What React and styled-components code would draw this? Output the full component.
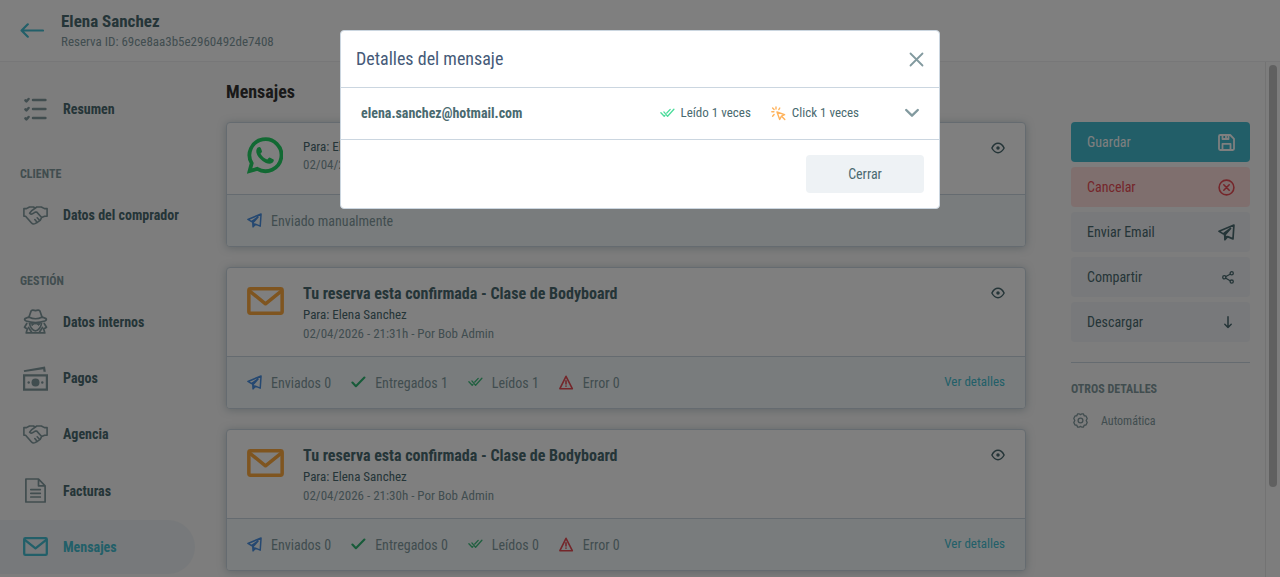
import React from 'react'
import styled, { createGlobalStyle } from 'styled-components';

const GlobalStyle = createGlobalStyle`
  * {
    box-sizing: border-box;
  }
  html, body {
    margin: 0;
    height: 100%;
    overflow: hidden;
  }
  body {
    font-family: 'Roboto Condensed', Roboto, sans-serif;
    font-stretch: 75%;
    color: #4a6a70;
    background: #fafafa;
  }
  svg {
    display: block;
    flex-shrink: 0;
  }
  button {
    font: inherit;
    border: 0;
    padding: 0;
    background: none;
  }
`;

// ---- icons ----

function Line({ w, h, box, stroke = 2, children }) {
  return (
    <svg
      width={w}
      height={h}
      viewBox={box || `0 0 ${w} ${h}`}
      fill="none"
      stroke="currentColor"
      strokeWidth={stroke}
      strokeLinecap="round"
      strokeLinejoin="round"
    >
      {children}
    </svg>
  )
}

const BackIcon = () => (
  <Line w={24} h={16} stroke={2.2}>
    <path d="M23 7.5H1.8M7.8 1.300L1.6 7.500L7.8 13.700" />
  </Line>
);

const ListIcon = () => (
  <Line w={25} h={25} stroke={2.5}>
    <path d="M10 3H22.400M10 12H22.400M10 21H22.400" />
    <path d="M2.400 3.400L3.400 4.400L5.600 2M2.400 12.400L3.400 13.400L5.600 11M2.400 21.400L3.400 22.400L5.600 20" />
  </Line>
);

const HandshakeIcon = () => (
  <Line w={25} h={19} stroke={1.6}>
    <path d="M12.3 2.2L10.5 1H6.5L3.5 2.6H0.9V10.2H2.6L8.3 16.7Q10 18.6 12 17.6L14.6 16.2L17.2 14.4L18.6 11.6L21.6 10.3H24.1V2.6H21.5L18.3 1H13.8L8.8 4.6L6.6 7.2Q8.4 9 10.6 7.2L12.2 6.1H13.8L18.4 11.2" />
    <path d="M11.8 13.6L13.7 15.8M14.2 11.8L16.3 14" />
  </Line>
);

const SpyIcon = () => (
  <Line w={25} h={25} stroke={1.7}>
    <path d="M5.8 8.5L8 2.200Q8.500 1 10 1.200L12.500 1.600L15 1.200Q16.500 1 17 2.200L19.200 8.500" />
    <path d="M5.800 8L2 9.600Q0.800 11 3.200 12Q12.500 15 21.800 12Q24.200 11 23 9.600L19.200 8Q12.500 11.500 5.800 8Z" />
    <path d="M6.500 14.500C7 18.500 10 21.800 12.500 21.800S18 18.500 18.500 14.500" />
    <path d="M7.500 14.300H17.500L15.600 16.600L14 15H11L9.400 16.600Z" fill="currentColor" strokeWidth="0.800" />
    <path d="M3.800 14.500L1.500 18.200L4.300 20L3.200 23.900H21.800L20.700 20L23.500 18.200L21.200 14.500M5.500 18.500L8.500 23M19.500 18.500L16.500 23" />
  </Line>
);

const CashIcon = () => (
  <svg width="25" height="25" viewBox="0 0 25 25" fill="none">
    <path d="M1.100 9.300H23.900V23.700H1.100Z" stroke="currentColor" strokeWidth="2.200" />
    <circle cx="12.500" cy="16.500" r="4" fill="currentColor" />
    <circle cx="5.700" cy="16.500" r="1.200" fill="currentColor" />
    <circle cx="19.300" cy="16.500" r="1.200" fill="currentColor" />
    <path d="M0.800 4.200L22 0.600L22.800 5.700H20.500L20.200 3.200L1.200 6Z" fill="currentColor" />
  </svg>
);

const InvoiceIcon = () => (
  <Line w={25} h={25} stroke={1.7}>
    <path d="M2.900 1H15.500L22.100 7.800V24H2.900ZM15.500 1V7.800H22.100" />
    <path d="M7.800 11.600H17.300M7.800 15.300H17.300M7.800 19H17.300" />
  </Line>
);

const MailIcon = ({ w = 25, h = 19, stroke = 2.3 }) => (
  <Line w={w} h={h} box="0 0 25 19" stroke={stroke}>
    <rect x="1.200" y="1.200" width="22.600" height="16.600" rx="1.100" />
    <path d="M1.800 2.800L12.500 11.400L23.200 2.800" />
  </Line>
);

const WhatsappIcon = () => (
  <svg width="36" height="37" viewBox="0 0 36 37">
    <path
      d="M2.600 34L4.700 26.300A16 16 0 1 1 10.300 31.900Z"
      fill="none"
      stroke="currentColor"
      strokeWidth="3.800"
    />
    <path
      d="M9.600 12.300C10.200 10.600 11.800 9.800 13 10.200C14 10.600 14.400 12.600 15 14.200C15.200 15 14.200 15.800 13.500 16.700C15 19.300 17.200 21.400 20.200 22.600C21 21.800 21.700 20.500 22.700 20.500L26.600 22.400C27.200 23 26.600 24.900 25.400 25.800C22.600 27.800 18.600 26.200 15.600 24C12.200 21.200 8 16.600 9.600 12.300Z"
      fill="currentColor"
    />
  </svg>
);

const PlaneIcon = ({ size = 15 }) => (
  <svg width={size} height={size} viewBox="0 0 16 16">
    <path
      d="M15 1L1 6.900L4.900 9.300L11.800 4.200L6.500 10.200V14.800L9 11.900L14.100 14Z"
      fill="none"
      stroke="currentColor"
      strokeWidth="1.600"
      strokeLinejoin="round"
    />
    <path d="M5 8.600L9.500 6L6.800 10.500L9.400 11.800L6.300 15Z" fill="currentColor" />
  </svg>
);

const CheckIcon = () => (
  <Line w={15} h={12} stroke={2.1}>
    <path d="M1.400 6.600L4.900 10.200L13.400 1.600" />
  </Line>
);

const DoubleCheckIcon = () => (
  <Line w={15} h={10} stroke={1.3}>
    <path d="M0.900 4.700L4.200 8.300L4.900 7.500M3.900 3.900L7.600 8.300L13.900 1.200M6.800 5L10.200 1.400" />
  </Line>
);

const WarningIcon = () => (
  <Line w={15} h={15} stroke={1.6}>
    <path d="M7 1.300L13.300 13.700H0.900Z" />
    <path d="M7 5.800V9M7 11V11.200" />
  </Line>
);

const EyeIcon = () => (
  <Line w={14} h={12} stroke={1.5}>
    <path d="M0.900 6C2.600 2.700 4.600 1.300 7 1.300S11.400 2.700 13.100 6C11.400 9.300 9.400 10.700 7 10.700S2.600 9.300 0.900 6Z" />
    <circle cx="7" cy="6" r="1" fill="currentColor" />
  </Line>
);

const SaveIcon = () => (
  <Line w={17} h={17} stroke={1.8}>
    <path d="M2.200 1H12.200L16 4.800V14.800Q16 16 14.800 16H2.200Q1 16 1 14.800V2.200Q1 1 2.200 1Z" />
    <path d="M4.500 1.200V5H10.500V1.200M4.500 15.800V9.800H12.500V15.800M8 2.200V3.500" />
  </Line>
);

const CancelIcon = () => (
  <Line w={17} h={17} stroke={1.6}>
    <circle cx="8.500" cy="8.500" r="7.400" />
    <path d="M5.800 5.800L11.200 11.200M11.200 5.800L5.800 11.200" />
  </Line>
);

const ShareIcon = () => (
  <Line w={12} h={13} stroke={1.3}>
    <circle cx="2.300" cy="6.300" r="1.600" />
    <circle cx="9.700" cy="2.300" r="1.600" />
    <circle cx="9.700" cy="10.600" r="1.600" />
    <path d="M3.900 5.500L8.100 3.200M3.900 7.200L8.100 9.700" />
  </Line>
);

const DownIcon = () => (
  <Line w={10} h={13} stroke={1.5}>
    <path d="M5 0.800V11.500M1.800 8.300L5 11.500L8.200 8.300" />
  </Line>
);

const GearIcon = () => (
  <Line w={15} h={15} stroke={1.3}>
    <path d="M4.700 0.800H6L7.500 1.600L9 0.800H10.300L11.300 2.900H13L14.200 5.500L13.200 7.500L14.200 9.500L13 12.100H11.300L10.300 14.200H9L7.500 13.400L6 14.200H4.700L3.700 12.100H2L0.800 9.500L1.800 7.500L0.800 5.500L2 2.900H3.700Z" />
    <circle cx="7.500" cy="7.500" r="2.400" />
  </Line>
);

const CloseIcon = () => (
  <Line w={15} h={15} stroke={1.8}>
    <path d="M1.500 1.500L13.500 13.500M13.500 1.500L1.500 13.500" />
  </Line>
);

const ClickIcon = () => (
  <Line w={15} h={15} stroke={1.4}>
    <path d="M6 6L13.600 8.700L10.500 10.200L8.700 13.400Z" />
    <path d="M10.800 10.600L13.800 13.600M5 0.900V3M8.800 2L7.800 3.600M1.600 2L3.100 3.500M0.800 5.700H2.900M3.100 8.500L1.600 10.300" />
  </Line>
);

const ChevronIcon = () => (
  <Line w={16} h={10} stroke={2.4}>
    <path d="M2.200 2L8 7.700L13.800 2" />
  </Line>
);

// ---- data ----

const menu = [
  { items: [{ label: 'Resumen', icon: <ListIcon /> }] },
  { title: 'CLIENTE', items: [{ label: 'Datos del comprador', icon: <HandshakeIcon /> }] },
  {
    title: 'GESTIÓN',
    items: [
      { label: 'Datos internos', icon: <SpyIcon /> },
      { label: 'Pagos', icon: <CashIcon /> },
      { label: 'Agencia', icon: <HandshakeIcon /> },
      { label: 'Facturas', icon: <InvoiceIcon /> },
      { label: 'Mensajes', icon: <MailIcon />, active: true },
    ],
  },
];

const messages = [
  { type: 'whatsapp', date: '02/04/2026 - 21:35h - Por Bob Admin' },
  { type: 'email', date: '02/04/2026 - 21:31h - Por Bob Admin', delivered: 1, read: 1 },
  { type: 'email', date: '02/04/2026 - 21:30h - Por Bob Admin', delivered: 0, read: 0 },
];

const actions = [
  { label: 'Guardar', icon: <SaveIcon />, variant: 'primary' },
  { label: 'Cancelar', icon: <CancelIcon />, variant: 'danger' },
  { label: 'Enviar Email', icon: <PlaneIcon size={17} /> },
  { label: 'Compartir', icon: <ShareIcon />, small: true },
  { label: 'Descargar', icon: <DownIcon />, small: true },
];

function Message({ message }) {
  const email = message.type === 'email';
  return (
    <Card>
      <CardTop $email={email}>
        <CardIcon $email={email}>
          {email ? <MailIcon w={37} h={28} stroke={2.4} /> : <WhatsappIcon />}
        </CardIcon>
        <CardText $email={email}>
          {email && <h3>Tu reserva esta confirmada - Clase de Bodyboard</h3>}
          <p>Para: Elena Sanchez</p>
          <small>{message.date}</small>
        </CardText>
        <Eye><EyeIcon /></Eye>
      </CardTop>
      <CardBottom>
        <Stat $color="#4a90e2"><PlaneIcon /><span>{email ? 'Enviados 0' : 'Enviado manualmente'}</span></Stat>
        {email && (
          <>
            <Stat $color="#2fb673"><CheckIcon /><span>Entregados {message.delivered}</span></Stat>
            <Stat $color="#3fbf7f"><DoubleCheckIcon /><span>Leídos {message.read}</span></Stat>
            <Stat $color="#e84c55"><WarningIcon /><span>Error 0</span></Stat>
            <Details>Ver detalles</Details>
          </>
        )}
      </CardBottom>
    </Card>
  )
}

export default function App() {
  return (
    <>
      <GlobalStyle />
      <Page>
        <Header>
          <BackIcon />
          <div>
            <h1>Elena Sanchez</h1>
            <p>Reserva ID: 69ce8aa3b5e2960492de7408</p>
          </div>
        </Header>
        <Body>
          <Sidebar>
            {menu.map((group, i) => (
              <React.Fragment key={i}>
                {group.title && <GroupTitle>{group.title}</GroupTitle>}
                {group.items.map((item) => (
                  <MenuItem key={item.label} $active={item.active}>
                    {item.icon}
                    <span>{item.label}</span>
                  </MenuItem>
                ))}
              </React.Fragment>
            ))}
          </Sidebar>
          <Main>
            <h2>Mensajes</h2>
            {messages.map((message, i) => <Message key={i} message={message} />)}
          </Main>
          <Aside>
            {actions.map(({ label, icon, variant, small }) => (
              <Action key={label} $variant={variant} $small={small}>
                <span>{label}</span>
                <i>{icon}</i>
              </Action>
            ))}
            <Divider />
            <h4>OTROS DETALLES</h4>
            <Detail><GearIcon /><span>Automática</span></Detail>
          </Aside>
          <Scrollbar><div /></Scrollbar>
        </Body>
      </Page>
      <Overlay>
        <Modal>
          <ModalHeader>
            <span>Detalles del mensaje</span>
            <CloseIcon />
          </ModalHeader>
          <Recipient>
            <b>elena.sanchez@hotmail.com</b>
            <Event $color="#4bdc9b"><DoubleCheckIcon /><span>Leído 1 veces</span></Event>
            <Event $color="#ffb35c"><ClickIcon /><span>Click 1 veces</span></Event>
            <ChevronIcon />
          </Recipient>
          <ModalFooter>
            <CloseButton>Cerrar</CloseButton>
          </ModalFooter>
        </Modal>
      </Overlay>
    </>
  )
}

const Page = styled.div`
  height: 577px;
  display: flex;
  flex-direction: column;
  overflow: hidden;
`;

const Header = styled.header`
  height: 62px;
  flex-shrink: 0;
  display: flex;
  align-items: center;
  gap: 17px;
  padding: 0 20px;
  background: #fff;
  border-bottom: 1px solid #eeeff0;
  color: #44bfd2;
  h1 {
    margin: -1px 0 1px;
    font-size: 17px;
    line-height: 22px;
    font-weight: 700;
    color: #4a6a70;
  }
  p {
    margin: 0;
    font-size: 13px;
    line-height: 18px;
    color: #829a9f;
  }
`;

const Body = styled.div`
  flex: 1;
  min-height: 0;
  display: flex;
  overflow: hidden;
`;

const Sidebar = styled.nav`
  width: 195px;
  flex-shrink: 0;
  padding-top: 20px;
`;

const GroupTitle = styled.div`
  height: 50.2px;
  padding: 28px 0 0 20px;
  font-size: 12px;
  line-height: 17px;
  font-weight: 700;
  color: #829a9f;
`;

const MenuItem = styled.div`
  height: 54px;
  margin-bottom: 2.25px;
  padding-left: 23px;
  display: flex;
  align-items: center;
  gap: 15px;
  border-radius: 0 27px 27px 0;
  background: ${({ $active }) => ($active ? '#eff3f6' : 'transparent')};
  color: ${({ $active }) => ($active ? '#44bfd2' : '#829a9f')};
  span {
    font-size: 14px;
    font-weight: 700;
    color: ${({ $active }) => ($active ? '#44bfd2' : '#4a6a70')};
  }
`;

const Main = styled.main`
  width: 800px;
  margin-left: 31px;
  padding-top: 19px;
  flex-shrink: 0;
  h2 {
    margin: 0 0 19px;
    font-size: 18px;
    line-height: 22px;
    font-weight: 700;
    color: #333;
  }
`;

const Card = styled.section`
  margin-bottom: 20px;
  border: 1px solid #cbd6e0;
  border-radius: 4px;
  background: #fff;
  box-shadow: 0 1px 8px rgba(90, 120, 130, 0.35);
  overflow: hidden;
`;

const CardTop = styled.div`
  height: ${({ $email }) => ($email ? 88 : 71)}px;
  display: flex;
  padding: 16px 20px 0;
`;

const CardIcon = styled.div`
  width: 56px;
  color: ${({ $email }) => ($email ? '#ffab40' : '#25d366')};
  padding-top: ${({ $email }) => ($email ? 2.5 : 0)}px;
  svg {
    margin-top: ${({ $email }) => ($email ? 0 : -2)}px;
    margin-left: -0.5px;
  }
`;

const CardText = styled.div`
  flex: 1;
  margin-top: ${({ $email }) => ($email ? 0 : -1)}px;
  h3, p, small {
    display: block;
    margin: 0;
    font-weight: 400;
  }
  h3 {
    font-size: 16px;
    line-height: 20px;
    margin-bottom: 1px;
    font-weight: 700;
  }
  p, small {
    font-size: 13px;
    line-height: ${({ $email }) => ($email ? 19 : 18)}px;
  }
  small {
    color: #829a9f;
  }
`;

const Eye = styled.div`
  padding-top: 3px;
`;

const CardBottom = styled.div`
  height: 52px;
  display: flex;
  align-items: center;
  padding: 0 20px;
  gap: 20px;
  border-top: 1px solid #cbd6e0;
  background: #f2f9fa;
`;

const Stat = styled.div`
  display: flex;
  align-items: center;
  gap: 9px;
  color: ${({ $color }) => $color};
  svg {
    margin-top: -1px;
  }
  span {
    font-size: 14px;
    color: #829a9f;
  }
`;

const Details = styled.a`
  margin: -2px 0 0 auto;
  font-size: 13px;
  color: #44bfd2;
`;

const Aside = styled.aside`
  width: 179px;
  margin-left: 45px;
  padding-top: 60px;
  h4 {
    margin: 0 0 16px;
    font-size: 12px;
    line-height: 16px;
    color: #829a9f;
  }
`;

const tones = {
  primary: { bg: '#44bcd0', fg: '#fff' },
  danger: { bg: '#ffdedd', fg: '#ea4c55' },
  plain: { bg: '#f0f3f6', fg: '#4a6a70' },
};

const Action = styled.button`
  width: 100%;
  height: 40px;
  margin-bottom: 5px;
  padding: 0 ${({ $small }) => ($small ? 14 : 15)}px 0 16px;
  display: flex;
  align-items: center;
  justify-content: space-between;
  border-radius: 4px;
  font-size: 14px;
  background: ${({ $variant }) => tones[$variant || 'plain'].bg};
  color: ${({ $variant }) => tones[$variant || 'plain'].fg};
  i {
    width: 17px;
    display: flex;
    justify-content: center;
  }
`;

const Divider = styled.hr`
  margin: 20px 0 18px;
  border: 0;
  border-top: 1px solid #cbd6e0;
`;

const Detail = styled.div`
  display: flex;
  align-items: center;
  gap: 13px;
  padding-left: 2px;
  font-size: 12px;
  color: #829a9f;
`;

const Scrollbar = styled.div`
  width: 15px;
  margin-left: auto;
  padding: 3px 3px 0;
  border-left: 1px solid #e6e6e6;
  div {
    width: 8px;
    height: 422px;
    border-radius: 4px;
    background: #c1c1c1;
  }
`;

const Overlay = styled.div`
  position: fixed;
  inset: 0;
  display: flex;
  justify-content: center;
  align-items: flex-start;
  padding-top: 30px;
  background: rgba(0, 0, 0, 0.5);
`;

const Modal = styled.div`
  width: 600px;
  border: 1px solid #cbd6e0;
  border-radius: 4px;
  background: #fff;
`;

const ModalHeader = styled.div`
  height: 57px;
  display: flex;
  align-items: center;
  justify-content: space-between;
  padding: 0 15px;
  border-bottom: 1px solid #cbd6e0;
  color: #829a9f;
  span {
    margin-top: -2px;
    font-size: 18px;
    color: #455a78;
  }
`;

const Recipient = styled.div`
  height: 52px;
  display: flex;
  align-items: center;
  padding: 0 19px 2px 20px;
  border-bottom: 1px solid #cbd6e0;
  color: #829a9f;
  b {
    flex: 1;
    font-size: 14px;
    color: #4a6a70;
  }
  > svg {
    margin-left: 45px;
  }
`;

const Event = styled.div`
  display: flex;
  align-items: center;
  gap: 6px;
  margin-left: 20px;
  color: ${({ $color }) => $color};
  svg {
    margin-top: 1px;
  }
  span {
    font-size: 13px;
    color: #4a6a70;
  }
`;

const ModalFooter = styled.div`
  height: 68px;
  display: flex;
  justify-content: flex-end;
  padding: 15px;
`;

const CloseButton = styled.button`
  width: 118px;
  height: 38px;
  border-radius: 4px;
  font-size: 14px;
  color: #4a6a70;
  background: #eef2f5;
`;
